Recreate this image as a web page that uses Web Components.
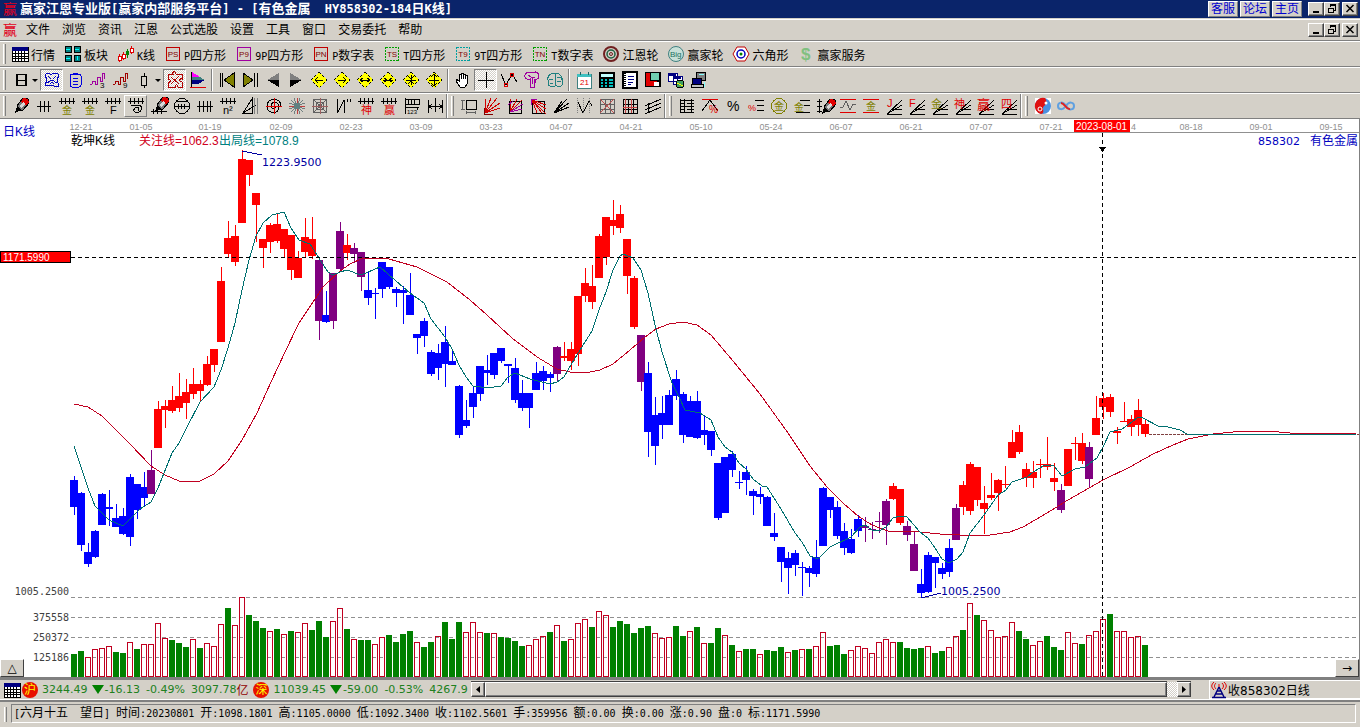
<!DOCTYPE html>
<html lang="zh-CN">
<head>
<meta charset="utf-8">
<title>赢家江恩专业版</title>
<style>
  html, body {
    margin: 0;
    height: 100%;
  }

  body {
    --face: #d4d0c8;
    --shade: #808080;
    --dark: #404040;
    --sans: "Liberation Sans", "Noto Sans CJK SC", sans-serif;
    --wide: "DejaVu Sans", "Noto Sans CJK SC", sans-serif;
    --mono: "DejaVu Sans Mono", "Noto Sans CJK SC", monospace;
    font-family: var(--sans);
    font-size: 12px;
    overflow: hidden;
  }
</style>
</head>
<body>
<trade-window></trade-window>

<script>
// Latin runs take half the width of a Chinese character
const half = s => s.replace(/[\x20-\x7e]+/g, m => `<span class="half">${m}</span>`)
const halfStyle = '.half { font-family: var(--mono); font-size: 10px; }'

const path = (d, stroke = '#000', extra = '') => `<path d="${d}" fill="none" stroke="${stroke}" ${extra}/>`
const fill = (d, color, extra = '') => `<path d="${d}" fill="${color}" ${extra}/>`
const glyph = (x, y, size, color, text) => `<text x="${x}" y="${y}" font-size="${size}" fill="${color}">${text}</text>`

const comb = path('M1 4.5h16M3.5 1v6M7.5 1v6M11.5 1v6M15.5 1v6')
const fan = path('M2 17L17 3M2 17L17 8M2 17h15M7 12.5h10')
const pencil = fill('M11 1l5 1 1 4-6 7-5 0-1-4z', '#777', 'stroke="#000"') + fill('M11 1l5 1 1 4-3 2-5-3z', '#e00000') + fill('M5 9l5 4-7 3z', '#000') + fill('M8 8l3-3 2 2-4 4z', '#d8d8d8')
const box = (color, text, dash) => `<rect x="2.5" y="2.5" width="13" height="13" fill="none" stroke="${color}" stroke-width="1.5" stroke-dasharray="${dash}"/>` +
  `<text x="9" y="12" font-size="8" text-anchor="middle" fill="#800000">${text}</text>`
const diamond = d => fill('M9 1l8 8-8 8-8-8z', '#ffff00', 'stroke="#000" stroke-dasharray="1 1"') + path(d)
const table = fill('M1 2h16v14H1z', '#fff', 'stroke="#000"') + fill('M1 2h16v4H1z', '#000080') + path('M1 8.5h16M1 11.5h16M1 13.5h16M4.5 6v10M7.5 6v10M10.5 6v10M13.5 6v10')

const icons = {
  table,
  blocks: ['1 1', '10 1', '1 10', '10 10'].map(p => fill(`M${p}h6v6h-6z`, '#008080', 'stroke="#000"')).join('') + path('M2 4h4M11 4h4M2 13h4M13 11v4', '#00ffff'),
  candles: path('M2.5 9v8M6.5 7v8M14.5 1v8', '#e00000') + path('M10.5 4v9', '#008000') + fill('M1 11h3v4H1zM5 9h3v4H5zM13 3h3v4h-3z', '#fff', 'stroke="#e00000"') + fill('M9 6h3v4H9z', '#008000'),
  ps: box('#c00000', 'PS', 'none'),
  p9: box('#a000a0', 'P9', 'none'),
  pn: box('#c00000', 'PN', 'none'),
  ts: box('#00a000', 'TS', '2 1'),
  t9: box('#00a0a0', 'T9', '2 1'),
  tn: box('#00a000', 'TN', '2 1'),
  gann: '<g fill="none"><circle cx="9" cy="9" r="7" stroke="#702020" stroke-width="2"/><circle cx="9" cy="9" r="4" stroke="#206040" stroke-width="1.5"/><circle cx="9" cy="9" r="1.5" stroke="#702020"/></g>',
  big: '<circle cx="9" cy="9" r="7.5" fill="#c8e0d8" stroke="#408080"/>' + glyph(3, 12, 8, '#207060', 'Big'),
  hex: fill('M5 2h8l4 7-4 7H5L1 9z', '#fff', 'stroke="#c00000"') + '<circle cx="9" cy="9" r="4" fill="none" stroke="#0000c0" stroke-width="1.5"/><circle cx="9" cy="9" r="1.5" fill="#008000"/>',
  dollar: '<text x="4" y="15" font-size="17" font-weight="700" fill="#80c080">$</text>',

  day: path('M4.5 3v12M13.5 3v12', '#000', 'stroke-width="2"') + path('M4 3.5h10M4 9.5h10M4 14.5h10'),
  face: path('M2 4c2-4 4 0 7-1 3 0 5-3 7 1l-2 5 2 6c-3 2-4 0-7-1-3 1-5 2-7 0l2-5zM5 5l3 3M13 5l-3 3M4 12l5-3 5 3M7 13l2-2 2 2', '#0000c0'),
  note: '<rect x="4" y="3" width="11" height="13" rx="2" fill="none" stroke="#0000e0"/>' + path('M7 2h5M7 7h5M7 10h5M7 13h5', '#0000e0'),
  wave3: path('M1 14l2-1v-3h3v3h2V6h3v4h2V2h2v6', '#a000a0') + glyph(11, 17, 8, '#000', '3'),
  wave9: path('M1 14l2-1v-3h3v3h2V6h3v4h2V2h2v6', '#a00000') + glyph(11, 17, 8, '#000', '9'),
  candle: path('M9 2v3M9 14v3') + path('M6.5 5h5v9h-5z'),
  puzzle: path('M2 3h5c-1-3 3-3 3 0h6v5c-3-1-3 3 0 3v5h-4c0-3-3-3-3 0H2v-5c3 1 3-3 0-3zM5 6l8 7M13 5l-8 8', '#b00000'),
  flag: fill('M3 1l8 5H3z', '#ff00ff') + fill('M3 6h8l5 3H3z', '#408080') + fill('M3 9h13l-7 4H3z', '#000080') + path('M2.5 1v15', '#000') + path('M1 16.5h16', '#e00000'),
  first: path('M2 2v14M4.5 2v14') + fill('M16 2v14L6 9z', '#808000', 'stroke="#000"'),
  last: path('M16 2v14M13.5 2v14') + fill('M2 2v14l10-7z', '#808000', 'stroke="#000"'),
  back: fill('M15 2v7H3z', '#808080') + fill('M3 9h12v7z', '#000'),
  forward: fill('M3 2v7h12z', '#808080') + fill('M15 9H3v7z', '#000'),
  left: diamond('M5 9h8M8 6L5 9l3 3'),
  right: diamond('M5 9h8M10 6l3 3-3 3'),
  spread: diamond('M4 9h10M7 7L4 9l3 2M11 7l3 2-3 2'),
  shrink: diamond('M4 9h10M5 7l3 2-3 2M13 7l-3 2 3 2'),
  narrow: diamond('M9 4v10M4 9h10M6 5l3 3 3-3M6 13l3-3 3 3'),
  grow: diamond('M9 3v12M4 9h10M6 6l3-3 3 3M6 12l3 3 3-3'),
  hand: fill('M6 16L2 10V8l3 2V3h2v5-6h2v6-5h2v5-4h2v9l-2 3z', '#fff', 'stroke="#000"'),
  cross: path('M9.5 1v16M1 9.5h16'),
  peaks: path('M1 3l5 11 6-11 5 8') + '<g fill="none" stroke="#e00000"><circle cx="12" cy="4" r="2"/><circle cx="6" cy="14" r="2"/></g>',
  brain: path('M2 4c2-4 5-3 7-2 3-2 7-1 7 3 0 3-3 4-5 3v8H7V8C4 9 1 7 2 4zM5 4l3 2h4M9 6v7M12 8v4', '#a000a0'),
  lobes: path('M2 14V9c-1-4 3-7 7-7s8 3 7 7v5c-2 3-5 2-6 0-2 3-5 2-8 0zM9 2v12M3 8h4M11 6h4M4 12h3M11 10h4', '#208080'),
  calendar: fill('M2 3h14v14H2z', '#fff', 'stroke="#408080"') + fill('M2 3h14v3H2z', '#40c0c0') + path('M5 1v3M13 1v3', '#206060') + glyph(5, 14, 8, '#e00000', '21'),
  calc: fill('M1 1h16v16H1z', '#000') + fill('M3 3h12v3H3z', '#c0ffff') + path('M3 9h2M7 9h2M11 9h4M3 12h2M7 12h2M11 12h4M3 15h2M7 15h2M11 15h4', '#00c0c0', 'stroke-width="2"'),
  book: fill('M2 1h14v16H2z', '#fff', 'stroke="#000" stroke-width="2"') + path('M4 2v14', '#000', 'stroke-dasharray="1 1" stroke-width="2"') + path('M7 5h6M7 8h6M7 11h5M7 13h3', '#000080'),
  disk: fill('M1 1h16v15H1z', '#000') + fill('M2 2h4v13H2zM5 10h8v5H5z', '#e00000') + fill('M7 2h8v7H7z', '#70d0b0') + fill('M10 11h5v4h-5z', '#fff'),
  sheets: fill('M1 2h9v8H1zM6 5h9v8H6z', '#fff', 'stroke="#000080"') + path('M2 4h7M7 7h7', '#000080', 'stroke-width="2"') + '<circle cx="13" cy="13" r="4" fill="#40a060" stroke="#000"/>' + path('M10 12l6 3', '#ff0'),
  machine: fill('M6 1h9v8H6z', '#808080', 'stroke="#000"') + fill('M2 7h9v6H2z', '#000080', 'stroke="#000"') + fill('M1 13h12v3H1z', '#c0c0c0', 'stroke="#000"') + path('M9 3h5M14 11v5', '#80ffff'),

  pencil,
  hash3: path('M2 9.5h14M5.5 4v11M9.5 4v11M13.5 4v11'),
  gold: comb + glyph(4, 17, 10, '#808000', '金'),
  combF: comb + glyph(6, 17, 11, '#000', 'F'),
  spiral: comb + path('M4 8.5h9c3 2 1 7-3 7s-4-4-1-5 4 2 2 3'),
  pencilComb: `<g transform="translate(2 -1)">${pencil}</g>` + path('M1 14.5h16M3.5 12v5M7.5 12v5M11.5 12v5'),
  ring: '<circle cx="9" cy="9" r="7.5" fill="none" stroke="#000"/>' + path('M1 9.5h16M5.5 7v5M8.5 7v5M11.5 7v5M4 4.5h10'),
  hash4: path('M1 9.5h16M3.5 4v11M7.5 4v11M11.5 4v11M14.5 4v11'),
  square: comb + glyph(4, 17, 11, '#000', 'n²'),
  slopes: path('M1 16L10 2v14zM1 16L14 8') + path('M12.5 1v16M15.5 1v16', '#808080'),
  target: path('M16 9c0-9-14-9-14 0 0 8 12 9 12 1 0-6-8-6-8-1 0 3 5 4 5 0') + path('M1 9.5h16M9.5 1v16', '#e00000'),
  star: path('M9.5 1v16M1 9.5h16', '#c04040') + path('M3 3l12 12M15 3L3 15M6 1l6 16M12 1L6 17M1 6l16 6M1 12l16-6', '#708080') + '<circle cx="9" cy="9" r="3" fill="#608080"/>',
  radar: path('M2.5 2.5h13v13h-13zM5.5 5.5h7v7h-7zM7.5 7.5h3v3h-3zM2 2l14 14M16 2L2 16', '#606060') + path('M9.5 1v16M1 9.5h16', '#a06060'),
  strokes: path('M3.5 2v14L10 3v13M13.5 2v3M16.5 2v3'),
  spirit: comb + glyph(4, 17, 11, '#e00000', '神'),
  win: comb + glyph(4, 17, 11, '#e00000', '赢'),
  ruler: path('M2.5 1v16M2 2.5h14v5H2M5.5 2v5M8.5 2v5M11.5 2v5M2 10.5h14M14.5 10v3') + glyph(4, 17, 6, '#000', '123'),
  span: path('M2.5 3v13M9.5 1v14M16.5 3v13M3 9.5h13M6 7L3 9.5 6 12M13 7l3 2.5-3 2.5'),

  frame: path('M6 3.5h10.5v9H6z') + path('M2.5 3v10M1 3.5h4M1 12.5h4M6 15.5h10M6.5 14v3M15.5 14v3', '#606060'),
  redFan: path('M2 16L3 2M2 16L8 1M2 16L14 1M2 16L17 6M2 16l15-5', '#d00000') + path('M1.5 11v6h8', '#800000'),
  boxFan: path('M3.5 4v12h12V4z') + path('M4 15L5 2M4 15L11 2M4 15L16 3', '#d00000') + path('M4 15l13-8M4 15l12-3M2 8l5-4', '#a000a0'),
  boxFanDown: path('M3.5 4v12h12V4z') + path('M3 3l5 13M3 3l10 13M3 3l14 14M3 3l14 9M3 3l14 5', '#d00000') + path('M2 2h6M2 2v6', '#a000a0'),
  fan: path('M2 16L15 2M2 16L17 6M2 16l15-6M2 16l8-12'),
  zigzag: path('M3 5l5 11 6-12 3 5') + path('M2.5 1v15M8.5 1v15M14.5 1v15', '#808080', 'stroke-dasharray="1 1"'),
  grid: path('M2.5 2v14h14V2zM7.5 2v14M12.5 2v14M2 7.5h14M2 12.5h14', '#606060') + path('M2 16L16 2M2 2l14 14', '#c05050'),
  gridBlack: path('M2.5 2v14h14M2 2.5h14v14M7.5 2v14M12.5 2v14M2 7.5h14M2 12.5h14') + path('M4.5 2v14M10 2v14M2 10h14', '#c04040'),
  parallels: path('M1 9l16-7M1 13l16-7M1 17l16-7M4.5 6v9'),

  ladder: path('M2.5 2v14M6.5 2v14M13.5 2v14M2 3.5h14M2 6.5h5M9 6.5h7M2 9.5h14M2 12.5h5M9 12.5h7M2 15.5h14'),
  slopePercent: path('M1 2.5h16', '#e00000') + path('M1 14L9 3l8 11') + glyph(8, 16, 10, '#e00000', '%'),
  percent: glyph(3, 14, 14, '#000', '%'),
  percentLines: path('M8 3.5h9M10 8.5h7M10 13.5h7') + glyph(1, 14, 9, '#e00000', '%'),
  goldRing: '<circle cx="9" cy="9" r="7.5" fill="none" stroke="#808000"/>' + glyph(4, 13, 10, '#808000', '金'),
  goldLines: path('M7 3.5h10M11 8.5h6M3 15.5h14') + glyph(1, 14, 10, '#808000', '金'),
  hashPencil: path('M3.5 2v14M1 4.5h5M1 9.5h5M1 14.5h5') + `<g transform="translate(3 1)">${pencil}</g>`,
  waveLines: path('M1 2.5h16M1 15.5h16', '#e00000') + path('M1 10h3l3-6 4 9 3-6h3', '#606060'),
  goldBars: path('M1 2.5h16M1 15.5h16', '#e00000') + glyph(4, 13, 10, '#808000', '金'),
  fanJ: fan + glyph(2, 10, 11, '#e00000', 'J'),
  fanF: fan + glyph(1, 10, 11, '#e00000', 'F'),
  fanGold: fan + glyph(0, 11, 11, '#808000', '金'),
  fanSpirit: fan + glyph(0, 11, 11, '#e00000', '神'),
  fanWin: fan + glyph(0, 12, 13, '#e00000', '赢'),
  fanFour: fan + glyph(1, 11, 11, '#e00000', '四'),
  taiji: fill('M1 1h16v16H1z', '#fff') + '<circle cx="9" cy="9" r="8" fill="#4a90e0"/><path d="M11 1a8 8 0 1 0-4 16c5-1 0-6 3-8s3-5 1-8z" fill="#e01010"/><circle cx="12" cy="6" r="1.5" fill="#fff"/><circle cx="6" cy="12" r="2" fill="none" stroke="#fff"/>',
  infinity: path('M9 9c3-5 8-4 8 0s-5 5-8 0', '#60a0e0', 'stroke-width="2"') + path('M9 9c-3-5-8-4-8 0s5 4 7 1', '#60a0e0', 'stroke-width="2"') + path('M4 6c4 0 5 7 9 6', '#e02020', 'stroke-width="2"'),
  tower: path('M9 6L4 16M9 6l5 10M6 13h6M7 10h4M2 16.5h14', '#000080', 'stroke-width="1.5"') + path('M6 8c-2-2-2-4 0-6M12 8c2-2 2-4 0-6M4 9C1 6 1 4 4 1M14 9c3-3 3-5 0-8M9 3v3', '#e00000')
}

class TbIcon extends HTMLElement {
  connectedCallback () {
    const name = this.getAttribute('name')
    // round shapes keep smooth edges, everything else is pixel sharp
    const smooth = ['gann', 'big', 'hex', 'taiji', 'infinity', 'dollar', 'tower'].includes(name)
    this.attachShadow({ mode: 'open' }).innerHTML = /* html */`
      <style>
        :host { display: block; width: 18px; height: 18px; flex: none; white-space: normal; }
        svg { display: block; overflow: visible; font-family: var(--sans); }
      </style>
      <svg width="18" height="18" viewBox="0 0 18 18" aria-hidden="true"
        shape-rendering="${smooth ? 'auto' : 'crispEdges'}">${icons[name]}</svg>
    `
  }
}

class ToolButton extends HTMLElement {
  connectedCallback () {
    const label = this.getAttribute('label')
    this.attachShadow({ mode: 'open' }).innerHTML = /* html */`
      <style>
        :host { display: flex; height: 22px; }
        button {
          display: flex;
          align-items: center;
          justify-content: center;
          gap: 2px;
          min-width: 23px;
          padding: 0;
          border: 1px solid transparent;
          background: none;
          color: #000;
          font: 12px var(--sans);
          white-space: nowrap;
        }
        .text { padding: 0 6px 0 1px; }
        :host([pressed]) button {
          border-color: var(--shade) #fff #fff var(--shade);
          background: repeating-conic-gradient(#fff 0 25%, var(--face) 0 50%) 0 0 / 2px 2px;
        }
        :host([raised]) button { border-color: #fff var(--shade) var(--shade) #fff; }
        .drop {
          border: 3px solid transparent;
          border-top-color: #000;
          border-bottom: 0;
        }
        :host([drop]) button { min-width: 31px; }
        ${halfStyle}
      </style>
      <button class="${label ? 'text' : ''}" type="button" aria-label="${label || this.getAttribute('icon')}">
        <tb-icon name="${this.getAttribute('icon')}"></tb-icon>
        ${label ? `<span>${half(label)}</span>` : ''}
        ${this.hasAttribute('drop') ? '<i class="drop"></i>' : ''}
      </button>
    `
  }
}

class ToolBand extends HTMLElement {
  connectedCallback () {
    this.attachShadow({ mode: 'open' }).innerHTML = /* html */`
      <style>
        :host { display: flex; align-items: center; border-right: 1px solid var(--shade); box-shadow: 1px 0 #fff; margin-right: 1px; }
        :host(:last-of-type) { border-right: 0; box-shadow: none; margin-right: 0; }
        .grip { width: 1px; height: 20px; margin: 0 3px 0 3px; border-left: 1px solid #fff; border-right: 1px solid var(--shade); }
      </style>
      <i class="grip"></i><slot></slot>
    `
  }
}

class ToolBar extends HTMLElement {
  connectedCallback () {
    this.attachShadow({ mode: 'open' }).innerHTML = /* html */`
      <style>
        :host {
          display: flex;
          box-sizing: border-box;
          height: 26px;
          border-top: 1px solid #fff;
          border-bottom: 1px solid var(--shade);
        }
      </style>
      <slot></slot>
    `
  }
}

class ToolSep extends HTMLElement {
  connectedCallback () {
    this.attachShadow({ mode: 'open' }).innerHTML = /* html */`
      <style>
        :host { display: block; width: 2px; height: 22px; margin: 0 2px; }
        i { display: block; height: 100%; border-left: 1px solid var(--shade); border-right: 1px solid #fff; box-sizing: border-box; }
      </style>
      <i></i>
    `
  }
}

class WinControls extends HTMLElement {
  connectedCallback () {
    this.attachShadow({ mode: 'open' }).innerHTML = /* html */`
      <style>
        :host { display: flex; }
        button {
          width: 16px;
          height: 14px;
          padding: 0;
          border: 1px solid;
          border-color: #fff var(--dark) var(--dark) #fff;
          background: var(--face);
          box-shadow: inset -1px -1px var(--shade);
        }
        button:last-child { margin-left: 2px; }
        svg { display: block; margin: auto; }
      </style>
      <button type="button" aria-label="最小化"><svg width="12" height="10"><path d="M3 8h6" stroke="#000" stroke-width="2"/></svg></button>
      <button type="button" aria-label="还原"><svg width="12" height="10" shape-rendering="crispEdges"><path d="M4.5 3V.5h5V6H8M4 1.5h6M2.5 4v4.5h5V4zM2 4.5h6" fill="none" stroke="#000"/></svg></button>
      <button type="button" aria-label="关闭"><svg width="12" height="10"><path d="M2.5 1l7 7M9.5 1l-7 7" stroke="#000" stroke-width="1.5"/></svg></button>
    `
  }
}

class TitleBar extends HTMLElement {
  connectedCallback () {
    this.attachShadow({ mode: 'open' }).innerHTML = /* html */`
      <style>
        :host {
          display: flex;
          align-items: center;
          height: 18px;
          padding: 0 2px 0 3px;
          background: #0a246a;
          color: #fff;
          border-bottom: 1px solid var(--face);
        }
        .logo { color: #e00020; font-size: 14px; line-height: 18px; width: 17px; }
        h1 { flex: 1; margin: 0; font-size: 13px; line-height: 18px; white-space: pre; }
        nav { display: flex; gap: 2px; margin-right: 6px; }
        a {
          width: 28px;
          height: 14px;
          border: 1px solid;
          border-color: #fff var(--shade) var(--shade) #fff;
          background: var(--face);
          color: #0000d0;
          line-height: 14px;
          text-align: center;
          text-decoration: none;
        }
        .half { font-family: var(--mono); font-size: 12px; }
      </style>
      <span class="logo">赢</span>
      <h1>${half('赢家江恩专业版[赢家内部服务平台] - [有色金属  HY858302-184日K线]')}</h1>
      <nav><a href="#kf">客服</a><a href="#lt">论坛</a><a href="#zy">主页</a></nav>
      <win-controls></win-controls>
    `
  }
}

class MenuBar extends HTMLElement {
  connectedCallback () {
    const items = ['文件', '浏览', '资讯', '江恩', '公式选股', '设置', '工具', '窗口', '交易委托', '帮助']
    this.attachShadow({ mode: 'open' }).innerHTML = /* html */`
      <style>
        :host {
          display: flex;
          align-items: center;
          height: 20px;
          padding: 0 2px 0 3px;
          border-top: 1px solid #fff;
          border-bottom: 1px solid var(--shade);
        }
        .logo { color: #e00020; font-size: 14px; line-height: 20px; width: 17px; }
        nav { display: flex; flex: 1; }
        button { padding: 0 6px; border: 0; background: none; color: #000; font: 12px/20px var(--sans); }
      </style>
      <span class="logo">赢</span>
      <nav>${items.map(i => `<button type="button">${i}</button>`).join('')}</nav>
      <win-controls></win-controls>
    `
  }
}

// colour, high, body top, body bottom, low: one candle every 7px
const candles = `b476,480,507,515 b492,493,545,551 b543,552,564,567 b530,531,557,558 b493,494,525,525 b490,507,509,526 b504,518,527,527
b508,516,534,535 b474,477,537,546 b484,484,510,519 b472,487,498,506 p450,470,494,494 r401,409,448,448 r400,406,410,428 r386,400,411,413
r373,396,408,412 r379,392,403,419 r368,384,394,399 r380,384,391,402 r356,364,385,386 r349,349,365,372 r267,281,342,342 r221,238,254,257
r225,236,262,266 r150,159,223,223 r160,160,175,186 r193,193,205,242 r239,239,248,268 r223,225,242,253 r213,224,241,243 r229,229,249,257
r235,235,270,280 r251,258,278,278 r218,237,252,257 r217,239,256,259 p260,260,321,340 b291,315,322,323 p273,273,321,329 p222,231,269,271
r234,245,253,260 p243,248,254,263 p252,252,277,291 b272,290,298,305 b288,293,294,319 b262,262,289,298 b267,267,287,289 b287,289,293,307
b286,290,293,324 b273,295,315,315 b334,334,338,354 b318,321,336,347 b350,352,374,376 b344,353,368,380 b326,342,364,387 b350,361,365,365
b385,386,435,438 b400,420,426,428 b386,393,407,418 b366,366,394,401 b355,370,373,385 b353,353,375,379 b348,348,361,363 b364,364,366,383
b358,368,400,403 b380,393,408,411 b393,393,408,428 b362,373,390,390 b366,371,381,390 b372,374,378,392 p346,347,374,382 r342,356,358,361
r342,349,361,370 r296,296,354,366 r268,283,296,302 r265,286,302,309 r234,236,278,278 r217,217,257,265 r200,220,226,235 r205,214,228,233
r239,239,276,294 r276,278,327,329 p335,335,382,391 b362,373,432,457 b397,415,446,465 b396,413,425,439 b390,395,425,425 b370,379,396,400
b392,394,435,443 b396,401,437,437 b391,401,438,439 b415,430,435,445 b431,431,450,456 b463,463,518,520 b457,457,513,513 b451,454,470,477
b471,482,483,489 b466,472,480,495 b489,491,496,515 b487,494,497,504 b496,497,526,526 b513,533,537,541 b547,547,562,582 b552,558,568,594
b550,553,565,576 b562,567,568,596 b566,568,573,587 b540,557,574,577 b487,488,546,546 b497,497,510,518 b501,507,536,539 b523,531,548,555
b529,539,553,554 b515,519,531,537 p517,526,528,542 p522,529,530,539 p512,521,522,533 p499,501,525,545 r483,486,499,500 r489,489,523,525
p521,526,535,541 p532,544,571,571 b569,584,593,598 b552,555,592,593 b557,557,563,588 b563,568,574,579 b539,548,572,577 p504,508,540,540
r481,485,507,515 r462,464,511,515 r467,467,500,506 r486,503,509,534 r473,495,498,500 r479,480,493,511 r466,484,485,488 r430,442,458,458
r425,432,452,454 r463,469,478,487 r461,472,478,488 r459,464,465,478 r437,464,467,470 r463,478,482,491 p484,490,510,513 r449,449,486,486
r437,443,444,460 r433,443,461,464 p442,447,479,488 r396,418,435,435 r393,398,407,419 r394,397,412,417 r427,431,433,444 r402,421,422,422
r415,419,427,436 r399,410,425,436 r420,424,434,437`.split(/\s+/)

// volume bars: g is filled, r is hollow
const volumes = `g23 g26 r20 r28 r29 r31 g25 g24 r35 g28 r33 r33 r54 r39 g37 g34 g30 r38 g29 r34 r31 r53 g69 r52 r80 g62 g56 g49 r46 g48
r43 g46 r45 r54 g47 g56 g40 r56 r69 g48 r38 g37 g37 r33 r40 g42 g35 g43 g46 r35 g30 g35 r41 g55 g38 g55 r45 r55 r45 g44 r44 g40 g39 g36
g31 r32 r38 r41 g45 r52 g36 r38 r54 r58 g50 r66 r62 g50 g56 g53 g44 g49 g51 r44 r39 r40 g51 g41 r46 g50 r34 g34 g49 r42 g32 r26 g28 g28
r23 g27 g26 g30 r25 g27 r28 g28 r31 r45 g31 g32 g23 r27 r31 r29 r24 r35 r38 r35 g35 g29 g28 g29 r31 g24 g26 r30 r41 g47 r74 g62 r57 r47
r40 r41 r55 g46 g38 r32 r36 g41 g30 g27 r45 r34 g33 r42 r46 r58 g63 r46 r46 r40 r41 g32`.split(/\s+/)

const slowLine = `74,404 88,407 102,416 116,430 130,444 151,466 165,475 179,481 186,482 200,481 214,474 228,461 242,440 257,413 271,382
285,352 299,323 313,302 323,287 340,271 350,264 361,259 374,258 389,259 417,267 447,282 470,300 487,315 512,338 537,357 557,369 570,372
585,373 600,370 613,364 630,350 645,337 656,329 669,324 683,322 697,325 711,335 733,361 760,394 788,433 810,466 827,487 843,503 858,516
872,525 888,531 920,532 940,534 960,535 990,535 1010,532 1023,527 1047,513 1068,500 1103,480 1130,467 1153,454 1173,445 1188,439
1213,434 1243,431 1267,431 1290,433 1356,433`

const fastLine = `74,446 88,488 95,506 109,520 123,526 140,509 151,502 158,488 172,453 179,443 186,429 200,402 214,387 221,370 228,348
235,323 242,290 249,260 256,236 263,223 272,215 284,212 291,228 299,240 310,244 317,255 328,272 333,275 340,272 347,270 361,275 380,267
396,281 410,293 424,303 431,319 445,337 452,349 459,365 466,377 473,386 488,388 501,386 508,377 515,373 530,379 550,384 557,382 564,377
572,363 585,342 592,331 599,310 606,292 613,270 620,256 623,254 633,258 641,270 648,293 655,325 662,352 672,383 680,399 685,410 700,413
711,420 718,437 725,447 732,452 739,463 746,469 753,479 762,486 767,487 781,509 795,533 802,542 810,556 818,559 830,547 851,537 860,527
865,525 872,530 879,531 886,527 893,518 900,516 907,517 920,532 928,538 935,548 942,559 949,563 957,559 963,552 970,533 984,515 998,495
1006,490 1012,482 1027,477 1033,472 1045,465 1054,466 1062,476 1075,469 1085,467 1097,458 1103,447 1110,432 1122,429 1132,422 1138,417
1143,418 1158,426 1168,427 1180,430 1187,434 1356,434`

const dates = [[81, '12-21'], [141, '01-05'], [210, '01-19'], [281, '02-09'], [351, '02-23'], [421, '03-09'], [491, '03-23'],
  [561, '04-07'], [631, '04-21'], [701, '05-10'], [771, '05-24'], [841, '06-07'], [911, '06-21'], [981, '07-07'], [1051, '07-21'],
  [1191, '08-18'], [1261, '09-01'], [1331, '09-15']]

class KChart extends HTMLElement {
  connectedCallback () {
    this.attachShadow({ mode: 'open' }).innerHTML = /* html */`
      <style>
        :host { display: block; position: relative; flex: 1; min-height: 0; background: #fff; border-right: 1px solid var(--shade); }
        svg { display: block; width: 100%; height: 100%; font: 12px var(--sans); }
        .date { font: 9px var(--sans); fill: #909090; text-anchor: middle; }
        .tag { font-size: 10px; fill: #fff; }
        .axis { font: 10px var(--mono); fill: #404040; text-anchor: end; }
        .wide { font: 11px var(--wide); }
        .grid { stroke: #909090; stroke-dasharray: 4 3; }
        .cross { stroke: #000; stroke-dasharray: 4 3; }
        button {
          position: absolute;
          bottom: 0;
          width: 24px;
          height: 18px;
          padding: 0;
          border: 1px solid;
          border-color: #fff var(--dark) var(--dark) #fff;
          background: var(--face);
          color: #000;
          font: 12px/14px var(--wide);
        }
        .up { left: 0; }
        .next { right: 0; }
      </style>
      <svg role="img" aria-label="日K线">
        <g transform="translate(0 -119)">
          <g shape-rendering="crispEdges">
            <line x1="71" y1="132.5" x2="100%" y2="132.5" stroke="#909090"/>
            ${[597, 617, 637, 657].map(y => `<line class="grid" x1="71" y1="${y}.5" x2="100%" y2="${y}.5"/>`).join('')}
            ${this.drawVolumes()}
            ${this.drawCandles()}
            <line x1="1149" y1="434.5" x2="100%" y2="434.5" stroke="#804040" stroke-dasharray="3 1"/>
            <polyline points="${slowLine}" fill="none" stroke="#c00020"/>
            <polyline points="${fastLine}" fill="none" stroke="#007070"/>
            <line class="cross" x1="71" y1="257.5" x2="100%" y2="257.5"/>
            <line class="cross" x1="1102.5" y1="133" x2="1102.5" y2="677"/>
            <path d="M1099 147h7l-3.5 5z"/>
            <path d="M242 151l20 4M921 598l20-5" fill="none" stroke="#0000a0"/>
            <rect x="0.5" y="251.5" width="70" height="11" fill="#f00" stroke="#000"/>
          </g>
          ${dates.map(([x, d]) => `<text class="date" x="${x}" y="130">${d}</text>`).join('')}
          <text class="date" x="1131" y="130" style="text-anchor: start">4</text>
          <rect x="1074" y="120" width="56" height="12" fill="#f00"/>
          <text class="tag" x="1076" y="130">2023-08-01</text>
          <text class="tag" x="3" y="261">1171.5990</text>
          <text x="3" y="136" fill="#0000c0">日K线</text>
          <text x="71" y="145">乾坤K线</text>
          <text x="139" y="145" fill="#d00020">关注线=1062.3</text>
          <text x="219" y="145" fill="#008080">出局线=1078.9</text>
          <text class="wide" x="262" y="166" fill="#0000a0">1223.9500</text>
          <text class="wide" x="941" y="595" fill="#0000a0">1005.2500</text>
          <svg x="100%" y="0" overflow="visible" style="width: 1px; height: 1px">
            <text x="-59" y="145" class="wide" fill="#0000c0" text-anchor="end">858302</text>
            <text x="-1" y="145" fill="#0000c0" text-anchor="end">有色金属</text>
          </svg>
          <text class="axis" x="69" y="595">1005.2500</text>
          <text class="axis" x="69" y="621">375558</text>
          <text class="axis" x="69" y="641">250372</text>
          <text class="axis" x="69" y="661">125186</text>
        </g>
      </svg>
      <button class="up" type="button">△</button>
      <button class="next" type="button">→</button>
    `
  }

  drawCandles () {
    const colors = { r: '#ff0000', b: '#0000ff', p: '#800080' }
    return candles.map((c, i) => {
      const [high, top, bottom, low] = c.slice(1).split(',').map(Number)
      const x = 74 + i * 7
      return `<path fill="${colors[c[0]]}" d="M${x} ${high}h1V${low}h-1zM${x - 4} ${top}h8V${bottom}h-8z"/>`
    }).join('')
  }

  drawVolumes () {
    return volumes.map((v, i) => {
      const h = Number(v.slice(1))
      const x = 71 + i * 7
      return v[0] === 'g'
        ? `<rect x="${x}" y="${677 - h}" width="6" height="${h}" fill="#008000"/>`
        : `<rect x="${x}.5" y="${677 - h}.5" width="5" height="${h - 1}" fill="none" stroke="#c00020"/>`
    }).join('')
  }
}

class QuoteBar extends HTMLElement {
  connectedCallback () {
    this.attachShadow({ mode: 'open' }).innerHTML = /* html */`
      <style>
        :host {
          display: flex;
          align-items: center;
          box-sizing: border-box;
          height: 23px;
          padding-left: 3px;
          border-top: 3px solid var(--shade);
          border-bottom: 1px solid #fff;
          font: 11px var(--wide);
          color: #208020;
        }
        .market {
          width: 16px;
          height: 16px;
          margin: 0 4px 0 1px;
          border-radius: 8px;
          background: #e81000;
          color: #ff0;
          font-size: 12px;
          font-weight: 400;
          line-height: 16px;
          text-align: center;
        }
        .down { margin: 0 1px 0 4px; border: 6px solid transparent; border-top: 9px solid #008000; border-bottom: 0; }
        span + span { margin-left: 6px; }
        .unit { color: #900000; margin-right: 4px; font-size: 12px; font-weight: 400; }
        .scroll { display: flex; flex: 1; margin-left: 3px; height: 15px; background: repeating-conic-gradient(#fff 0 25%, var(--face) 0 50%) 0 0 / 2px 2px; }
        .scroll button, .thumb {
          box-sizing: border-box;
          border: 1px solid;
          border-color: #fff var(--dark) var(--dark) #fff;
          background: var(--face);
          box-shadow: inset -1px -1px var(--shade), 0 -1px var(--dark);
        }
        .scroll button { width: 14px; padding: 0; }
        .scroll svg { display: block; margin: auto; }
        .thumb { flex: 1; margin-right: 10px; }
        .feed {
          display: flex;
          align-items: center;
          box-sizing: border-box;
          width: 151px;
          height: 19px;
          margin-left: 18px;
          border: 1px solid #fff;
          border-right: 0;
          color: #000;
          font-size: 12px;
        }
      </style>
      <tb-icon name="table"></tb-icon>
      <b class="market">沪</b>
      <span>3244.49</span><i class="down"></i><span>-16.13</span><span>-0.49%</span><span>3097.78</span><b class="unit">亿</b>
      <b class="market">深</b>
      <span>11039.45</span><i class="down"></i><span>-59.00</span><span>-0.53%</span><span>4267.9</span>
      <div class="scroll">
        <button type="button" aria-label="向左"><svg width="6" height="7"><path d="M5 0v7L1 3.5z"/></svg></button>
        <div class="thumb"></div>
        <button type="button" aria-label="向右"><svg width="6" height="7"><path d="M1 0v7l4-3.5z"/></svg></button>
      </div>
      <div class="feed"><tb-icon name="tower"></tb-icon>收858302日线</div>
    `
  }
}

class InfoBar extends HTMLElement {
  connectedCallback () {
    const text = '[六月十五　望日] 时间:20230801 开:1098.1801 高:1105.0000 低:1092.3400 收:1102.5601 手:359956 额:0.00 换:0.00 涨:0.90 盘:0 标:1171.5990'
    this.attachShadow({ mode: 'open' }).innerHTML = /* html */`
      <style>
        :host {
          display: flex;
          box-sizing: border-box;
          height: 28px;
          padding: 2px 4px 4px 4px;
          border-top: 2px solid var(--shade);
          border-bottom: 1px solid #fff;
        }
        .grip { width: 1px; margin: 3px 4px 1px 0; border-left: 1px solid #fff; border-right: 1px solid var(--shade); }
        p {
          flex: 1;
          margin: 0;
          padding-left: 2px;
          border: 1px solid;
          border-color: var(--shade) #fff #fff var(--shade);
          line-height: 17px;
          white-space: pre;
        }
        ${halfStyle}
      </style>
      <i class="grip"></i><p>${half(text)}</p>
    `
  }
}

// a name may end in ! (pressed), ^ (raised) or > (has a drop-down)
const band = names => `<tool-band>${names.split(' ').map(n => n === '|'
  ? '<tool-sep></tool-sep>'
  : `<tool-button icon="${n.replace(/[!^>]/, '')}"${n.endsWith('!') ? ' pressed' : ''}${n.endsWith('^') ? ' raised' : ''}${n.endsWith('>') ? ' drop' : ''}></tool-button>`).join('')}</tool-band>`

class TradeWindow extends HTMLElement {
  connectedCallback () {
    const views = [['table', '行情'], ['blocks', '板块'], ['candles', 'K线'], ['ps', 'P四方形'], ['p9', '9P四方形'], ['pn', 'P数字表'],
      ['ts', 'T四方形'], ['t9', '9T四方形'], ['tn', 'T数字表'], ['gann', '江恩轮'], ['big', '赢家轮'], ['hex', '六角形'], ['dollar', '赢家服务']]
    this.attachShadow({ mode: 'open' }).innerHTML = /* html */`
      <style>
        :host { display: flex; flex-direction: column; height: 100vh; background: var(--face); }
        title-bar, menu-bar, tool-bar, quote-bar, info-bar { flex: none; }
      </style>
      <title-bar></title-bar>
      <menu-bar></menu-bar>
      <tool-bar>
        <tool-band>${views.map(([icon, label]) => `<tool-button icon="${icon}" label="${label}"></tool-button>`).join('')}</tool-band>
      </tool-bar>
      <tool-bar>${band('day> face! note wave3 wave9 candle> puzzle! flag | first last back forward left right spread shrink narrow grow | hand cross! peaks brain lobes | calendar calc book disk sheets machine')}</tool-bar>
      <tool-bar>
        ${band('pencil hash3 gold gold combF spiral^ pencilComb ring hash4 square slopes target star radar strokes spirit win ruler span')}
        ${band('frame redFan boxFan boxFanDown fan zigzag grid gridBlack parallels')}
        ${band('ladder slopePercent percent percentLines goldRing goldLines hashPencil waveLines goldBars fanJ fanF fanGold fanSpirit fanWin fanFour')}
        ${band('taiji infinity')}
      </tool-bar>
      <k-chart></k-chart>
      <quote-bar></quote-bar>
      <info-bar></info-bar>
    `
  }
}

customElements.define('tb-icon', TbIcon)
customElements.define('tool-button', ToolButton)
customElements.define('tool-band', ToolBand)
customElements.define('tool-bar', ToolBar)
customElements.define('tool-sep', ToolSep)
customElements.define('win-controls', WinControls)
customElements.define('title-bar', TitleBar)
customElements.define('menu-bar', MenuBar)
customElements.define('k-chart', KChart)
customElements.define('quote-bar', QuoteBar)
customElements.define('info-bar', InfoBar)
customElements.define('trade-window', TradeWindow)
</script>
</body>
</html>
